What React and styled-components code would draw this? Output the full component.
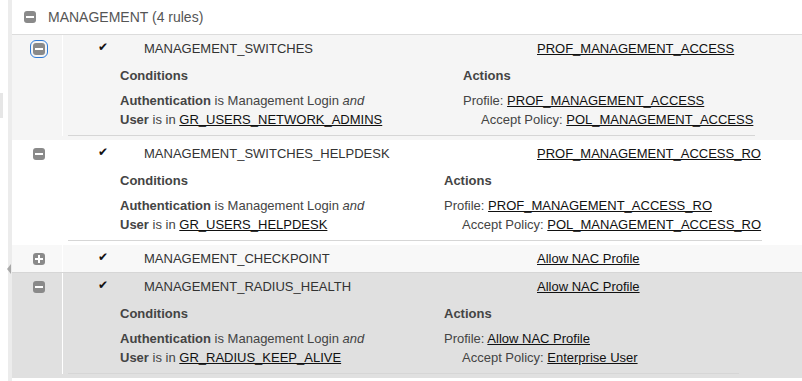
import React from 'react';
import styled, { createGlobalStyle } from "styled-components";

const GlobalStyle = createGlobalStyle`
  html, body {
    margin: 0;
    padding: 0;
    background: #fff;
    font-family: "Liberation Sans", Arial, sans-serif;
    color: #333;
  }
`;

const Page = styled.div`
  position: relative;
  display: flex;
  min-height: 100vh;
  overflow: hidden;
`;

const Gutter = styled.div`
  width: 4px;
  margin-left: 8px;
  background: #ececec;
  flex-shrink: 0;
`;

const SideTab = styled.div`
  position: absolute;
  left: 0;
  top: 93px;
  width: 3px;
  height: 25px;
  background: #e6e6e6;
`;

const CollapseHandle = styled.div`
  position: absolute;
  left: 7px;
  top: 264px;
  width: 0;
  height: 0;
  border-top: 5px solid transparent;
  border-bottom: 5px solid transparent;
  border-right: 4px solid #a8a8a8;
`;

const Panel = styled.div`
  flex: 1;
  display: flex;
  flex-direction: column;
`;

const GroupHeader = styled.div`
  display: flex;
  align-items: center;
  gap: 12px;
  height: 34px;
  padding-left: 12px;
  border-bottom: 1px solid #dcdcdc;
  font-size: 14px;
  color: #555;
`;

const Toggle = styled.span`
  position: relative;
  display: inline-block;
  width: 12px;
  height: 12px;
  border-radius: 3px;
  background: #8a8a8a;
  flex-shrink: 0;
  outline: ${(p) => (p.$focused ? "1px solid #2f7bd8" : "none")};
  outline-offset: 2px;

  &::before {
    content: "";
    position: absolute;
    left: 2px;
    top: 5px;
    width: 8px;
    height: 2px;
    background: #fff;
  }

  &::after {
    content: "";
    display: ${(p) => (p.$open ? "none" : "block")};
    position: absolute;
    left: 5px;
    top: 2px;
    width: 2px;
    height: 8px;
    background: #fff;
  }
`;

const Row = styled.div`
  display: flex;
  background: ${(p) => p.$bg};
  padding-bottom: ${(p) => (p.$open ? "4px" : "0")};
  border-bottom: ${(p) => (p.$line ? "1px solid #d6d6d6" : "none")};
`;

const ToggleCell = styled.div`
  width: 50px;
  flex-shrink: 0;
  border-right: 1px solid #fff;
`;

const ToggleBox = styled.div`
  height: 27px;
  display: flex;
  align-items: center;
  padding-left: 21px;
`;

const Content = styled.div`
  flex: 1;
  display: flex;
  flex-direction: column;
`;

const Summary = styled.div`
  display: grid;
  grid-template-columns: 46px 393px auto;
  align-items: center;
  height: 27px;
  padding-left: 35px;
  font-size: 13px;
  color: #333;
`;

const Check = styled.span`
  font-family: "DejaVu Sans", sans-serif;
  font-size: 12px;
  color: #111;
  line-height: 1;
  margin-top: -3px;
`;

const Link = styled.a`
  color: #111;
  text-decoration: underline;
  cursor: pointer;
`;

const Details = styled.div`
  display: grid;
  grid-template-columns: ${(p) => p.$condWidth}px auto;
  width: ${(p) => p.$width}px;
  box-sizing: border-box;
  margin-left: 5px;
  padding: 5px 0 6px 52px;
  border-bottom: 1px solid #d6d6d6;
  font-size: 13px;
  color: #444;
`;

const Column = styled.div`
  display: flex;
  flex-direction: column;
`;

const Heading = styled.div`
  font-weight: bold;
  line-height: 17px;
  margin-bottom: 7px;
  color: #444;
`;

const Line = styled.div`
  line-height: 19px;
  white-space: nowrap;
  padding-left: ${(p) => p.$indent || 0}px;
`;

const rules = [
  {
    name: "MANAGEMENT_SWITCHES",
    profile: "PROF_MANAGEMENT_ACCESS",
    policy: "POL_MANAGEMENT_ACCESS",
    group: "GR_USERS_NETWORK_ADMINS",
    open: true,
    focused: true,
    bg: "#f5f5f5",
    condWidth: 343,
    width: 687,
  },
  {
    name: "MANAGEMENT_SWITCHES_HELPDESK",
    profile: "PROF_MANAGEMENT_ACCESS_RO",
    policy: "POL_MANAGEMENT_ACCESS_RO",
    group: "GR_USERS_HELPDESK",
    open: true,
    bg: "#fff",
    condWidth: 324,
    width: 694,
  },
  {
    name: "MANAGEMENT_CHECKPOINT",
    profile: "Allow NAC Profile",
    open: false,
    bg: "#f8f8f8",
    line: true,
  },
  {
    name: "MANAGEMENT_RADIUS_HEALTH",
    profile: "Allow NAC Profile",
    policy: "Enterprise User",
    group: "GR_RADIUS_KEEP_ALIVE",
    open: true,
    bg: "#e0e0e0",
    condWidth: 324,
    width: 671,
  },
];

const RuleRow = ({ rule }) => (
  <Row $bg={rule.bg} $open={rule.open} $line={rule.line}>
    <ToggleCell>
      <ToggleBox>
        <Toggle $open={rule.open} $focused={rule.focused} />
      </ToggleBox>
    </ToggleCell>
    <Content>
      <Summary>
        <Check>✔</Check>
        <span>{rule.name}</span>
        <span>
          <Link>{rule.profile}</Link>
        </span>
      </Summary>
      {rule.open && (
        <Details $condWidth={rule.condWidth} $width={rule.width}>
          <Column>
            <Heading>Conditions</Heading>
            <Line>
              <b>Authentication</b> is Management Login <i>and</i>
            </Line>
            <Line>
              <b>User</b> is in <Link>{rule.group}</Link>
            </Line>
          </Column>
          <Column>
            <Heading>Actions</Heading>
            <Line>
              Profile: <Link>{rule.profile}</Link>
            </Line>
            <Line $indent={18}>
              Accept Policy: <Link>{rule.policy}</Link>
            </Line>
          </Column>
        </Details>
      )}
    </Content>
  </Row>
);

const App = () => {
  return (
    <Page>
      <GlobalStyle />
      <SideTab />
      <CollapseHandle />
      <Gutter />
      <Panel>
        <GroupHeader>
          <Toggle $open />
          <span>MANAGEMENT (4 rules)</span>
        </GroupHeader>
        {rules.map((rule) => (
          <RuleRow key={rule.name} rule={rule} />
        ))}
      </Panel>
    </Page>
  );
};

export default App;
